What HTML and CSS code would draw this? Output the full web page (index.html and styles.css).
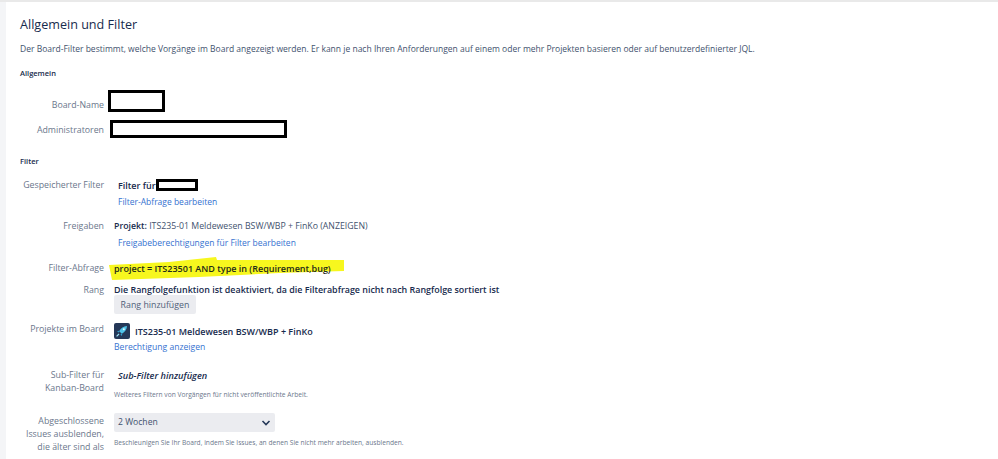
FILE: index.html
```html
<!DOCTYPE html>
<html lang="de">
<head>
  <meta charset="UTF-8" />
  <title>Allgemein und Filter</title>
  <link rel="stylesheet" href="styles.css">
</head>
<body>
  <div class="page">
    <h2>Allgemein und Filter</h2>
    <p class="intro">Der Board-Filter bestimmt, welche Vorgänge im Board angezeigt werden. Er kann je nach Ihren Anforderungen auf einem oder mehr Projekten basieren oder auf benutzerdefinierter JQL.</p>

    <h3 class="section-general">Allgemein</h3>
    <div class="row row-name">
      <div class="label">Board-Name</div>
      <div class="redact redact-name"></div>
    </div>
    <div class="row row-admin">
      <div class="label">Administratoren</div>
      <div class="redact redact-admin"></div>
    </div>

    <h3 class="section-filter">Filter</h3>
    <div class="row row-saved">
      <div class="label">Gespeicherter Filter</div>
      <div class="value indent">
        <div class="line-saved"><b>Filter für</b><span class="redact redact-filter"></span></div>
        <a href="#">Filter-Abfrage bearbeiten</a>
      </div>
    </div>
    <div class="row row-shares">
      <div class="label">Freigaben</div>
      <div class="value">
        <div class="line-shares"><b class="semi">Projekt:</b> ITS235-01 Meldewesen BSW/WBP + FinKo (ANZEIGEN)</div>
        <a class="indent link-shares" href="#">Freigabeberechtigungen für Filter bearbeiten</a>
      </div>
    </div>
    <div class="row row-query">
      <div class="label">Filter-Abfrage</div>
      <div class="value query">
        <svg class="marker" width="236" height="24" viewBox="0 0 236 24"><path d="M0 8 L60 5 L107 0 L108 3 L235 3 L235 14 L170 16 L90 20 L3 23 Z" fill="#f7f71e"/></svg>
        <b>project = ITS23501 AND type in (Requirement,bug)</b>
      </div>
    </div>
    <div class="row row-rank">
      <div class="label">Rang</div>
      <div class="value">
        <b class="navy">Die Rangfolgefunktion ist deaktiviert, da die Filterabfrage nicht nach Rangfolge sortiert ist</b>
        <button class="btn">Rang hinzufügen</button>
      </div>
    </div>
    <div class="row row-projects">
      <div class="label">Projekte im Board</div>
      <div class="value">
        <div class="project">
          <svg class="avatar" width="16" height="16" viewBox="0 0 16 16">
            <rect width="16" height="16" rx="2" fill="#253858"/>
            <path d="M13 3 C9.5 3.2 7 5 5.2 8.2 L7.8 10.8 C11 9 12.8 6.5 13 3 Z" fill="#4fc3e8"/>
            <path d="M5.6 7.6 L3 8.4 L4.6 9.6 Z M8.4 10.4 L7.6 13 L6.4 11.4 Z" fill="#2f9fd0"/>
            <path d="M5 11 L2.6 13.4" stroke="#9fe3f5" stroke-width="1.2"/>
            <circle cx="9.8" cy="6.2" r="1" fill="#e8f8fd"/>
          </svg>
          <b>ITS235-01 Meldewesen BSW/WBP + FinKo</b>
        </div>
        <a class="link-perm" href="#">Berechtigung anzeigen</a>
      </div>
    </div>
    <div class="row row-sub">
      <div class="label">Sub-Filter für<br>Kanban-Board</div>
      <div class="value">
        <b class="indent sub-add">Sub-Filter hinzufügen</b>
        <div class="hint hint-sub">Weiteres Filtern von Vorgängen für nicht veröffentlichte Arbeit.</div>
      </div>
    </div>
    <div class="row row-done">
      <div class="label">Abgeschlossene<br>Issues ausblenden,<br>die älter sind als</div>
      <div class="value">
        <div class="select">2 Wochen
          <svg width="10" height="6" viewBox="0 0 10 6"><path d="M1.5 1 L5 4.5 L8.5 1" fill="none" stroke="#253858" stroke-width="1.6"/></svg>
        </div>
        <div class="hint hint-done">Beschleunigen Sie Ihr Board, indem Sie Issues, an denen Sie nicht mehr arbeiten, ausblenden.</div>
      </div>
    </div>
  </div>
</body>
</html>
```

FILE: styles.css
```css
html, body {
  height: 100%;
}

body {
  margin: 0;
  background: #f4f5f7;
  border-top: 2px solid #e9e9e9;
  box-sizing: border-box;
  overflow: hidden;
  font-family: "Open Sans", "Noto Sans", sans-serif;
  font-size: 9px;
  line-height: 13px;
  color: #42526e;
}

.page {
  margin-left: 6px;
  height: 100%;
  background: #fff;
  padding: 13px 0 0 14px;
}

h2 {
  margin: 0;
  font-size: 12.6px;
  line-height: 20px;
  font-weight: 400;
  color: #172b4d;
}

.intro {
  margin: 7px 0 0;
  font-size: 8.52px;
}

h3 {
  margin: 0;
  font-size: 7.5px;
  line-height: 11px;
  font-weight: 600;
  color: #172b4d;
}

.section-general {
  margin-top: 13px;
}

.section-filter {
  margin-top: 18px;
}

.row {
  display: flex;
  column-gap: 10px;
}

.label {
  flex: none;
  width: 84px;
  text-align: right;
  color: #6b778c;
  font-size: 8.8px;
}

.value {
  min-width: 0;
}

.value a {
  display: block;
  color: #3572d0;
  text-decoration: none;
  margin-top: 3px;
  font-size: 8.5px;
}

b {
  font-weight: 600;
  color: #172b4d;
}

.indent {
  margin-left: 4px;
}

.redact {
  display: block;
  box-sizing: border-box;
  background: #fff;
  border: 3px solid #000;
}

.row-name {
  margin-top: 11px;
}

.row-name .label {
  margin-top: 9px;
}

.redact-name {
  width: 57px;
  height: 22px;
  margin-left: -6px;
}

.row-admin {
  margin-top: 8px;
  align-items: center;
}

.row-admin .label {
  padding-top: 2px;
}

.redact-admin {
  width: 177px;
  height: 18px;
  margin-left: -4px;
}

.row-saved {
  margin-top: 12px;
}

.line-saved {
  display: flex;
  align-items: center;
}

.redact-filter {
  width: 42px;
  height: 12px;
  margin-top: -2px;
}

.row-shares {
  margin-top: 12px;
}

.line-shares {
  font-size: 8.75px;
}

.semi {
  font-weight: 600;
}

.value .link-shares {
  margin-top: 3px;
  margin-left: 4px;
}

.row-query {
  margin-top: 13px;
}

.query {
  position: relative;
}

.marker {
  position: absolute;
  left: -5px;
  top: -5px;
}

.query b {
  position: relative;
  color: #1d2a1a;
}

.row-rank {
  margin-top: 8px;
}

.row-rank .label {
  padding-top: 1px;
}

.navy {
  display: block;
  font-size: 8.92px;
}

.btn {
  display: block;
  margin-top: -1px;
  height: 19px;
  width: 82px;
  padding: 1px 0 0;
  border: 0;
  border-radius: 2px;
  background: #ebecf0;
  color: #505f79;
  font: inherit;
  font-size: 8.8px;
}

.row-projects {
  margin-top: 9px;
}

.project {
  display: flex;
  align-items: center;
  column-gap: 5px;
}

.value .link-perm {
  margin-top: 2px;
  font-size: 8.6px;
}

.row-sub {
  margin-top: 15px;
}

.sub-add {
  display: block;
  font-style: italic;
  font-size: 9.2px;
}

.hint {
  font-size: 6.65px;
  line-height: 10px;
  color: #6b778c;
}

.hint-sub {
  margin-top: 8px;
}

.row-done {
  margin-top: 13px;
}

.row-done .label {
  padding-top: 2px;
}

.select {
  display: flex;
  align-items: center;
  justify-content: space-between;
  box-sizing: border-box;
  width: 161px;
  height: 19px;
  padding: 0 4px;
  background: #ebecf0;
  border-radius: 2px;
  color: #42526e;
  font-size: 8.6px;
}

.hint-done {
  margin-top: 6px;
}
```
